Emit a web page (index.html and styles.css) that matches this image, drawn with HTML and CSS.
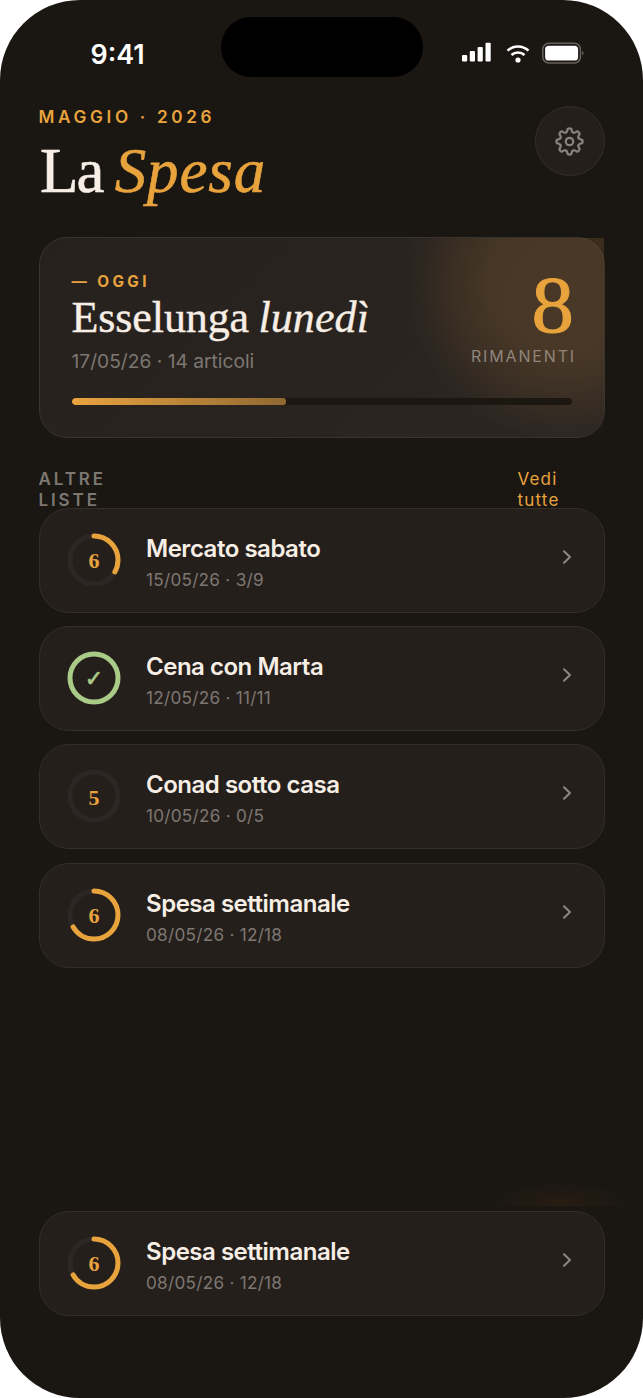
FILE: index.html
```html
<!DOCTYPE html>
<html lang="it">
<head>
<meta charset="utf-8">
<title>La Spesa</title>
<link rel="stylesheet" href="styles.css">
</head>
<body>
<svg class="defs" width="0" height="0" aria-hidden="true">
  <symbol id="chevron" viewBox="0 0 10 16"><path d="M2 2.2 8 8 2 13.8"/></symbol>
  <path id="tooth" d="M-3.21-7.76Q-2-8.26-1.9-9.4A1.9 1.9 0 0 1 1.9-9.4Q2-8.26 3.21-7.76"/>
</svg>
<main class="phone">
  <div class="status">
    <span class="time">9:41</span>
    <span class="island"></span>
    <span class="signals">
      <svg width="30" height="20" viewBox="0 0 30 20" fill="#fff"><rect x="0" y="13" width="5.2" height="6.6" rx="1"/><rect x="7.8" y="9" width="5.2" height="10.6" rx="1"/><rect x="15.6" y="5" width="5.2" height="14.6" rx="1"/><rect x="23.5" y=".8" width="5.2" height="18.8" rx="1"/></svg>
      <svg class="wifi" width="24" height="20" viewBox="0 0 24 20" fill="none" stroke="#fff" stroke-width="2.5"><path d="M1.5 7.7a15.2 15.2 0 0 1 21 0M5.5 12a9.4 9.4 0 0 1 13 0"/><circle cx="12" cy="17" r="2.6" fill="#fff" stroke="none"/></svg>
      <svg class="battery" width="42" height="22" viewBox="0 0 42 22"><rect x=".8" y="1.3" width="37.6" height="19.6" rx="6" fill="none" stroke="#66635f" stroke-width="1.5"/><rect x="3.1" y="3.7" width="33" height="14.8" rx="3.6" fill="#fff"/><path d="M40.2 8.7q2.6 2.4 0 4.8z" fill="#77736f"/></svg>
    </span>
  </div>

  <header class="header">
    <div>
      <p class="eyebrow">MAGGIO · 2026</p>
      <h1 class="title">La <em>Spesa</em></h1>
    </div>
    <button class="settings" aria-label="Impostazioni">
      <svg width="29" height="29" viewBox="-12.5 -12.5 25 25"><circle r="3.2"/><use href="#tooth"/><use href="#tooth" transform="rotate(45)"/><use href="#tooth" transform="rotate(90)"/><use href="#tooth" transform="rotate(135)"/><use href="#tooth" transform="rotate(180)"/><use href="#tooth" transform="rotate(225)"/><use href="#tooth" transform="rotate(270)"/><use href="#tooth" transform="rotate(315)"/></svg>
    </button>
  </header>

  <section class="today">
    <div class="today-row">
      <div>
        <p class="today-label">— OGGI</p>
        <h2 class="today-name">Esselunga <em>lunedì</em></h2>
        <p class="today-meta">17/05/26 · 14 articoli</p>
      </div>
      <div class="remaining">
        <span class="count">8</span>
        <span class="count-label">RIMANENTI</span>
      </div>
    </div>
    <div class="bar"><div class="bar-fill" style="width:42.9%"></div></div>
  </section>

  <div class="section-head">
    <h3 class="section-title">ALTRE<br>LISTE</h3>
    <a class="see-all">Vedi<br>tutte</a>
  </div>

  <section class="lists">
    <article class="list">
      <div class="ring"><svg viewBox="0 0 54 54"><circle class="track" cx="27" cy="27" r="24"/><circle class="value" cx="27" cy="27" r="24" pathLength="100" stroke-dasharray="33.3 100"/></svg><span>6</span></div>
      <div class="info"><h4>Mercato sabato</h4><p>15/05/26 · 3/9</p></div>
      <svg class="chevron"><use href="#chevron"/></svg>
    </article>
    <article class="list">
      <div class="ring done"><svg viewBox="0 0 54 54"><circle class="value" cx="27" cy="27" r="24"/></svg><span>✓</span></div>
      <div class="info"><h4>Cena con Marta</h4><p>12/05/26 · 11/11</p></div>
      <svg class="chevron"><use href="#chevron"/></svg>
    </article>
    <article class="list">
      <div class="ring"><svg viewBox="0 0 54 54"><circle class="track" cx="27" cy="27" r="24"/></svg><span>5</span></div>
      <div class="info"><h4>Conad sotto casa</h4><p>10/05/26 · 0/5</p></div>
      <svg class="chevron"><use href="#chevron"/></svg>
    </article>
    <article class="list">
      <div class="ring"><svg viewBox="0 0 54 54"><circle class="track" cx="27" cy="27" r="24"/><circle class="value" cx="27" cy="27" r="24" pathLength="100" stroke-dasharray="66.7 100"/></svg><span>6</span></div>
      <div class="info"><h4>Spesa settimanale</h4><p>08/05/26 · 12/18</p></div>
      <svg class="chevron"><use href="#chevron"/></svg>
    </article>
  </section>

  <section class="dock">
    <article class="list">
      <div class="ring"><svg viewBox="0 0 54 54"><circle class="track" cx="27" cy="27" r="24"/><circle class="value" cx="27" cy="27" r="24" pathLength="100" stroke-dasharray="66.7 100"/></svg><span>6</span></div>
      <div class="info"><h4>Spesa settimanale</h4><p>08/05/26 · 12/18</p></div>
      <svg class="chevron"><use href="#chevron"/></svg>
    </article>
  </section>
</main>
</body>
</html>
```
FILE: styles.css
```css
:root {
  --bg: #1a1713;
  --surface: #251f1c;
  --line: #332e2a;
  --text: #f7eee5;
  --muted: #7d7772;
  --accent: #e8a33d;
  --green: #aaca88;
  --serif: "Liberation Serif", serif;
}
* { box-sizing: border-box; margin: 0; padding: 0; }
body { background: #fff; font-family: Inter, sans-serif; color: var(--text); }
.defs { display: block; position: absolute; }
.phone {
  width: 643px; height: 1398px; padding: 0 38.5px 82.5px;
  background: var(--bg); border-radius: 80px;
  display: flex; flex-direction: column; overflow: hidden;
}
.status {
  height: 106px; padding: 17px 0 0 52px;
  display: flex; align-items: flex-start;
}
.time { width: 130px; font-size: 26.8px; line-height: 32px; font-weight: 600; color: #fff; padding: 21px 0 0; }
.island { width: 202px; height: 60px; border-radius: 30px; background: #000; }
.signals { display: flex; padding: 25px 0 0 39px; }
.wifi { margin-left: 14px; margin-top: 1px; }
.battery { margin-left: 12px; }

.header { display: flex; justify-content: space-between; height: 130.5px; }
.eyebrow { font-size: 17.2px; line-height: 22px; font-weight: 600; letter-spacing: 3.65px; color: var(--accent); }
.title { font: 400 63px/70px var(--serif); letter-spacing: -2px; margin: 8px 0 0 1.5px; white-space: nowrap; -webkit-text-stroke: .6px; }
.title em { color: var(--accent); letter-spacing: .9px; margin-left: -1.5px; }
.settings {
  width: 70px; height: 70px; border-radius: 50%;
  border: 1.5px solid var(--line); background: var(--surface);
  display: grid; place-items: center;
}
.settings svg { fill: none; stroke: #89827c; stroke-width: 1.9; stroke-linecap: round; stroke-linejoin: round; }

.today {
  position: relative; height: 201px; padding: 33px 32px 0;
  border: 1.5px solid #3a342e; border-radius: 28px;
  background: linear-gradient(135deg, #26211d, #2c2622);
}
.today::after {
  content: ""; position: absolute; top: 0; right: 0; width: 230px; height: 198px;
  background: radial-gradient(circle at 190px 44px, rgba(226,152,66,.17) 0, rgba(226,152,66,.16) 70px, rgba(226,152,66,.09) 112px, rgba(226,152,66,.03) 140px, transparent 160px);
}
.today-row { position: relative; z-index: 1; display: flex; justify-content: space-between; height: 127px; }
.today-label { font-size: 15.3px; line-height: 20px; font-weight: 700; letter-spacing: 3.4px; color: var(--accent); padding-top: 1px; }
.today-name { font: 400 44px/50px var(--serif); letter-spacing: -.1px; white-space: nowrap; margin-top: 1px; -webkit-text-stroke: .4px; }
.today-name em { margin-left: -1.5px; letter-spacing: .1px; }
.today-meta { font-size: 19.2px; line-height: 24px; color: var(--muted); margin-top: 6.5px; }
.remaining { display: flex; flex-direction: column; align-items: flex-end; }
.count { font: 400 80px/70px var(--serif); color: var(--accent); transform: translate(2px, -1px) scaleX(1.06); transform-origin: right; -webkit-text-stroke: 1px; }
.count-label { font-size: 16px; line-height: 20px; letter-spacing: 1.85px; color: #8f857a; margin: 5px -4.5px 0 0; }
.bar { height: 7px; border-radius: 4px; background: #1d1711; overflow: hidden; position: relative; z-index: 1; }
.bar-fill { height: 100%; border-radius: 3px; background: linear-gradient(90deg, #eaa440, #8f6831); }

.section-head { display: flex; justify-content: space-between; height: 70px; padding: 31.5px 45px 0 0; }
.section-title, .see-all { font-size: 17px; line-height: 20.7px; }
.section-title { font-weight: 600; letter-spacing: 2.9px; color: var(--muted); }
.see-all { color: var(--accent); letter-spacing: 1.2px; }

.lists { display: flex; flex-direction: column; gap: 13.4px; }
.list {
  height: 105px; padding: 0 32px 0 28px;
  display: flex; align-items: center;
  border: 1.5px solid var(--line); border-radius: 30px; background: var(--surface);
}
.ring { width: 54px; height: 54px; margin: -1px 0 0 -.5px; display: grid; place-items: center; }
.ring > * { grid-area: 1 / 1; }
.ring svg { width: 54px; height: 54px; transform: rotate(-90deg); fill: none; stroke-width: 5; }
.track { stroke: #2c2724; }
.value { stroke: var(--accent); stroke-linecap: round; }
.ring span { font: 700 22px/24px var(--serif); color: var(--accent); padding-top: 3px; }
.done .value { stroke: var(--green); }
.ring.done span { color: var(--green); font-family: "DejaVu Sans", sans-serif; -webkit-text-stroke: .7px; }
.info { flex: 1; padding: 4px 0 0 25px; }
.info h4 { font-size: 24px; line-height: 30px; font-weight: 600; letter-spacing: -.48px; }
.info p { font-size: 17.2px; line-height: 22px; margin-top: 5px; letter-spacing: .25px; color: var(--muted); }
.chevron { width: 10px; height: 16px; margin-bottom: 7px; fill: none; stroke: #8e8781; stroke-width: 2; stroke-linecap: round; stroke-linejoin: round; }

.dock { position: relative; margin-top: auto; }
.dock::before {
  content: ""; position: absolute; left: 450px; top: -35px; width: 145px; height: 30px;
  background: radial-gradient(ellipse 68px 24px at 50% 100%, #281d12, transparent);
}
```
